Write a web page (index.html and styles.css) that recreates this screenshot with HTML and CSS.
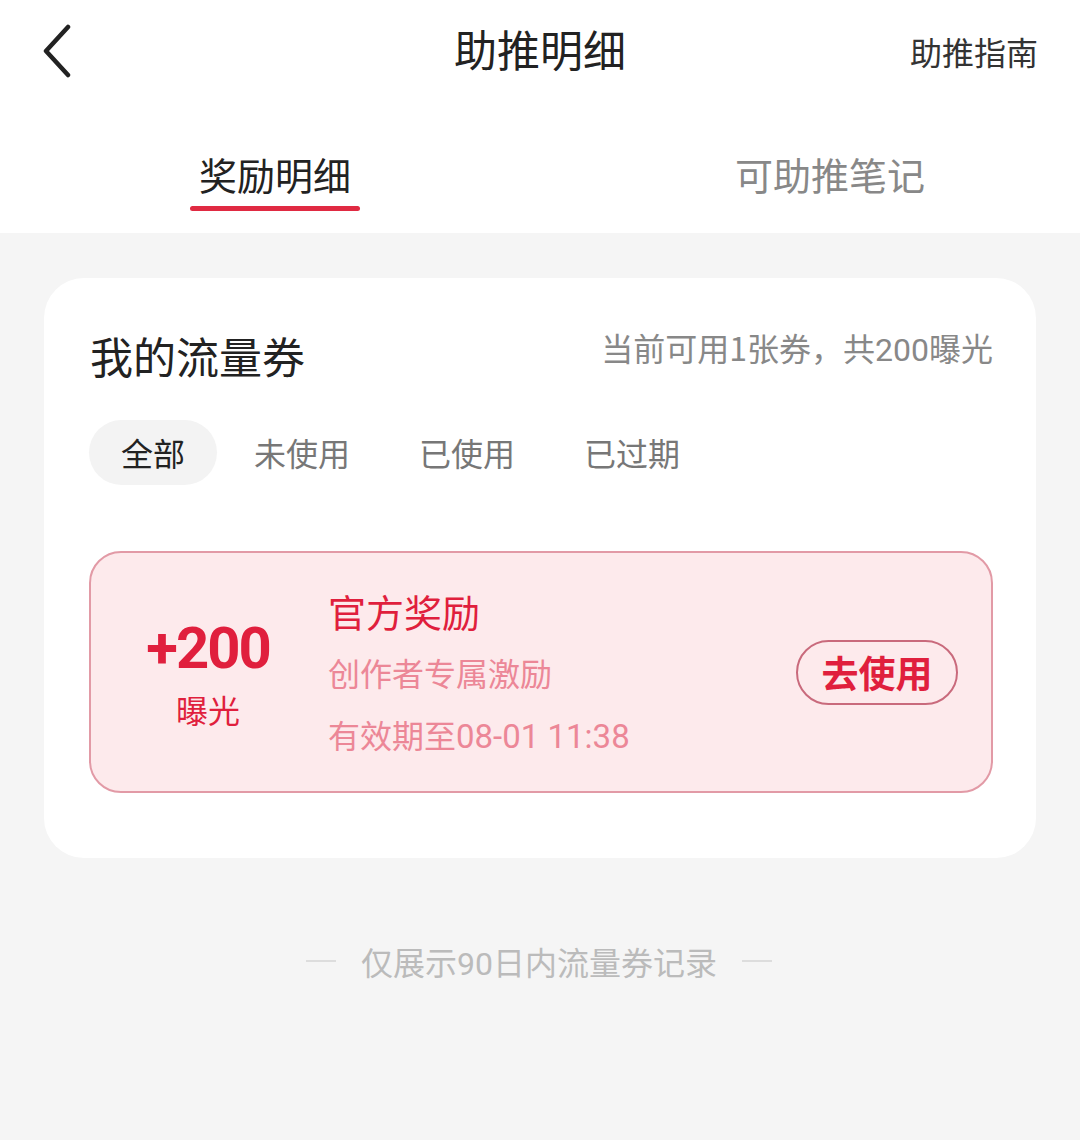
FILE: index.html
```html
<!DOCTYPE html>
<html lang="zh-CN">
<head>
  <meta charset="UTF-8">
  <meta name="viewport" content="width=device-width, initial-scale=1.0">
  <title>助推明细</title>
  <link rel="stylesheet" href="styles.css">
</head>
<body>
  <div class="header">
    <div class="topbar">
      <a class="back" href="#">
        <svg width="30" height="54" viewBox="0 0 30 54"><path d="M26 3 L4 27 L26 51" fill="none" stroke="#222" stroke-width="4.5" stroke-linecap="round" stroke-linejoin="round"/></svg>
      </a>
      <div class="title">助推明细</div>
      <a class="guide" href="#">助推指南</a>
    </div>
    <div class="tabs">
      <div class="tab active">奖励明细</div>
      <div class="tab">可助推笔记</div>
    </div>
  </div>

  <div class="main">
    <div class="card">
      <div class="card-head">
        <h2>我的流量券</h2>
        <span class="summary">当前可用1张券，共<span class="num">200</span>曝光</span>
      </div>
      <div class="filters">
        <span class="filter active">全部</span>
        <span class="filter">未使用</span>
        <span class="filter">已使用</span>
        <span class="filter">已过期</span>
      </div>

      <div class="coupon">
        <div class="coupon-value">
          <div class="amount">+200</div>
          <div class="unit">曝光</div>
        </div>
        <div class="coupon-info">
          <div class="coupon-name">官方奖励</div>
          <div class="coupon-desc">创作者专属激励</div>
          <div class="coupon-desc">有效期至<span class="num">08-01 11:38</span></div>
        </div>
        <button class="use-btn">去使用</button>
      </div>
    </div>

    <div class="footnote">
      <span class="line"></span>
      <span>仅展示<span class="num">90</span>日内流量券记录</span>
      <span class="line"></span>
    </div>
  </div>
</body>
</html>
```

FILE: styles.css
```css
body {
  margin: 0;
  font-family: "Noto Sans CJK SC", "Noto Sans", sans-serif;
  background-color: #f5f5f5;
  color: #333;
  min-height: 1140px;
}
.num {
  font-family: Roboto, "Noto Sans CJK SC", sans-serif;
}
.header {
  background-color: #fff;
}
.topbar {
  height: 104px;
  display: grid;
  grid-template-columns: 1fr auto 1fr;
  align-items: center;
  padding: 0 42px;
}
.back {
  display: flex;
  align-items: center;
  margin-top: -2px;
}
.title {
  font-size: 43px;
  color: #222;
  margin-top: -8px;
}
.guide {
  justify-self: end;
  font-size: 32px;
  color: #333;
  text-decoration: none;
  margin-top: -2px;
}
.tabs {
  height: 129px;
  display: flex;
  padding-left: 190px;
  gap: 366px;
}
.tab {
  font-size: 38px;
  color: #888;
  padding: 42px 9px 0;
  line-height: 56px;
  height: 129px;
  box-sizing: border-box;
}
.tab.active {
  color: #222;
  position: relative;
}
.tab.active::after {
  content: "";
  position: absolute;
  left: 0;
  right: 0;
  top: 102px;
  height: 5px;
  border-radius: 3px;
  background-color: #e02a42;
}
.main {
  padding: 45px 44px 0;
}
.card {
  background-color: #fff;
  border-radius: 40px;
  padding: 46px 43px 65px 45px;
}
.card-head {
  display: flex;
  justify-content: space-between;
  align-items: center;
  padding-left: 1px;
}
.card-head h2 {
  margin: 0;
  font-size: 43px;
  font-weight: normal;
  color: #222;
  line-height: 62px;
}
.summary {
  font-size: 32px;
  color: #888;
  padding-bottom: 16px;
}
.filters {
  display: flex;
  gap: 5px;
  margin-top: 34px;
}
.filter {
  font-size: 32px;
  color: #777;
  padding: 0 32px;
  height: 65px;
  line-height: 65px;
  border-radius: 33px;
}
.filter.active {
  background-color: #f3f3f3;
  color: #222;
}
.coupon {
  margin-top: 66px;
  height: 242px;
  box-sizing: border-box;
  background-color: #fdeaec;
  border: 2px solid #e29aa6;
  border-radius: 32px;
  display: flex;
  align-items: center;
  padding-right: 33px;
}
.coupon-value {
  width: 234px;
  text-align: center;
  color: #e01f3d;
  margin-top: 4px;
}
.amount {
  font-family: Roboto, sans-serif;
  font-weight: bold;
  font-size: 58px;
  letter-spacing: -2px;
  line-height: 66px;
}
.unit {
  font-size: 32px;
  line-height: 48px;
  margin-top: 4px;
}
.coupon-info {
  flex: 1;
  padding-left: 3px;
  margin-top: 4px;
}
.coupon-name {
  font-size: 38px;
  color: #e01f3d;
  line-height: 60px;
}
.coupon-desc {
  font-size: 32px;
  color: #ec8797;
  line-height: 62px;
}
.coupon-desc .num {
  font-size: 33px;
}
.use-btn {
  font-family: "Noto Sans CJK SC", sans-serif;
  width: 162px;
  height: 65px;
  border: 2px solid #c96a7c;
  border-radius: 33px;
  background: transparent;
  color: #e01f3d;
  font-size: 37px;
  font-weight: bold;
  padding: 0;
  line-height: 60px;
  cursor: pointer;
}
.footnote {
  display: flex;
  justify-content: center;
  align-items: center;
  gap: 25px;
  margin-top: 80px;
  font-size: 32px;
  color: #bbb;
  padding-right: 2px;
}
.footnote .line {
  width: 30px;
  height: 2px;
  background-color: #ddd;
}
```
